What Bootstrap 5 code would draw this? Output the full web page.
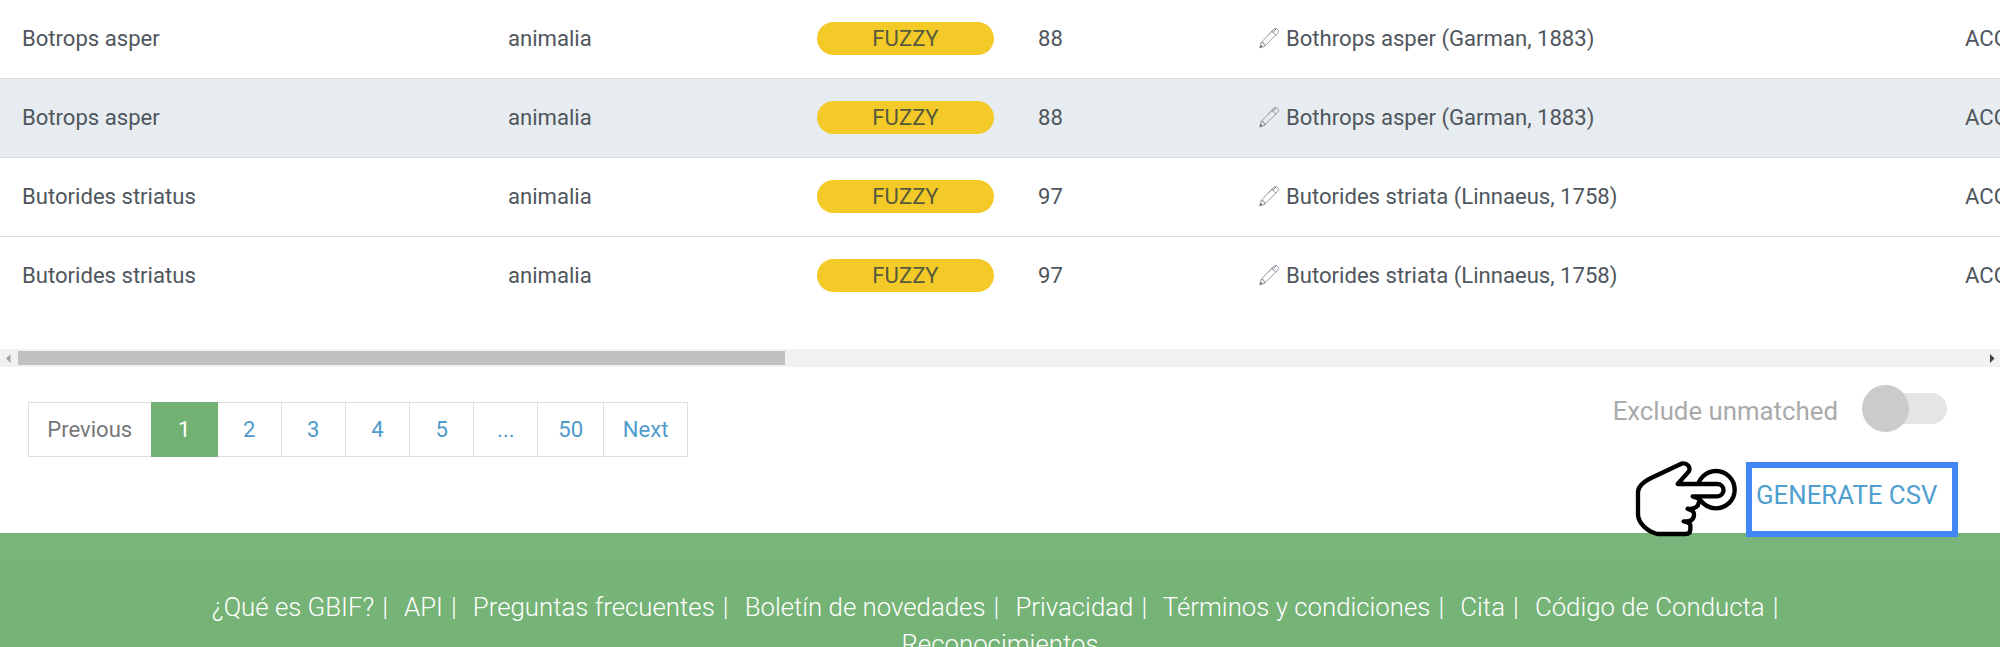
<!DOCTYPE html>
<html lang="es">
<head>
<meta charset="utf-8">
<meta name="viewport" content="width=device-width, initial-scale=1">
<title>GBIF</title>
<link href="https://cdn.jsdelivr.net/npm/bootstrap@5.3.0/dist/css/bootstrap.min.css" rel="stylesheet">
<style>
body{font-family:Roboto,"Liberation Sans",sans-serif;font-size:22.1px;color:#4f565d;height:647px;overflow:hidden;background:#fff}
.results{table-layout:fixed;width:2486px;margin:-1px 0 0}
.results td{height:79px;padding:0 0 0 22px;border-bottom:1px solid #dcdfe1;vertical-align:middle;white-space:nowrap;color:#4f565d;line-height:33px}
.results tr:last-child td{border-bottom:0;padding-bottom:1px}
.results tr.picked td{background:#e7ecf0}
.match{width:177px;height:33px;line-height:33px;background:#f4ca28;color:#575a3b}
.results-wrap{height:349px;overflow:hidden}
.pen{margin:0 6px 0 1px;vertical-align:-3px}
.hbar{height:18px;background:#f1f1f1;padding:0 5px 0 6px}
.hbar .thumb{width:767px;height:14px;background:#c1c1c1;margin-left:7px}
.below{height:166px}
.pages{margin:35px 0 0 27.5px}
.pages .page-link{height:55px;line-height:53px;padding:0;text-align:center;border:1px solid #ddd;border-radius:0!important;color:#509bca;font-size:22.1px}
.pages .disabled .page-link{color:#777;background:#fff}
.pages .active .page-link{background:#71b171;border-color:#71b171;color:#fff}
.w-prev{width:124.5px}.w-one{width:65.500px}.w-num{width:64.2px}.w-fifty{width:65.5px}.w-next{width:84.5px}
.switch-label{font-size:25.8px;line-height:36px;color:#aaa;margin-right:31px}
.switch-row{padding:18px 53px 0 0;height:84px}
.track{width:78px;height:31px;margin-top:8px;border-radius:16px;background:#e5e5e5}
.knob{left:-7px;top:-8px;width:47px;height:47px;background:#cbcbcb}
.csv-row{margin:4px 42px 0 0;height:85px}
.csv{width:212px;height:75px;margin:7px 0 0 1px;border:6px solid #4285f4;color:#509fce;font-size:25.8px;line-height:40px;padding:7px 0 0 4px;white-space:nowrap}
.foot{height:114px;padding-top:56px;background:linear-gradient(#79b57a,#74b275);color:#fff;font-weight:300;font-size:25.8px;line-height:37px}
.foot i{font-style:normal;margin:0 9.8px 0 1.8px}
</style>
</head>
<body>
<svg class="d-none">
<symbol id="pen" viewBox="0 0 22 22">
<g fill="none" stroke="#858a92" stroke-width=".9" stroke-linejoin="round" stroke-linecap="round"><path d="M1 21 2.300 15.800 15.500 1.800Q17 .5 18.300 1.300L20.300 2.900Q21.200 4 20 5.500L6 19.500Z"/><path d="M2.300 15.800 4.500 15.800 5 17.400 6.300 17.700 6 19.500M1 21 3.500 18.500M13.500 4 17.700 8M10 7.500 15.500 2M18 1.200 14.600 5.500"/></g>
<path d="M1 21 1.600 18.500 3.400 20.200Z" fill="#555a60"/>
</symbol>
</svg>
<main class="results-wrap">
<table class="results">
<colgroup><col style="width:486px"><col style="width:309px"><col style="width:221px"><col style="width:220px"><col style="width:707px"><col></colgroup>
<tbody>
<tr><td>Botrops asper</td><td>animalia</td><td><div class="match rounded-pill text-center">FUZZY</div></td><td>88</td><td><svg class="pen" width="21" height="22"><use href="#pen"/></svg>Bothrops asper (Garman, 1883)</td><td>ACCEPTED</td></tr>
<tr class="picked"><td>Botrops asper</td><td>animalia</td><td><div class="match rounded-pill text-center">FUZZY</div></td><td>88</td><td><svg class="pen" width="21" height="22"><use href="#pen"/></svg>Bothrops asper (Garman, 1883)</td><td>ACCEPTED</td></tr>
<tr><td>Butorides striatus</td><td>animalia</td><td><div class="match rounded-pill text-center">FUZZY</div></td><td>97</td><td><svg class="pen" width="21" height="22"><use href="#pen"/></svg>Butorides striata (Linnaeus, 1758)</td><td>ACCEPTED</td></tr>
<tr><td>Butorides striatus</td><td>animalia</td><td><div class="match rounded-pill text-center">FUZZY</div></td><td>97</td><td><svg class="pen" width="21" height="22"><use href="#pen"/></svg>Butorides striata (Linnaeus, 1758)</td><td>ACCEPTED</td></tr>
</tbody>
</table>
</main>
<div class="hbar d-flex align-items-center">
<svg width="5" height="9"><path d="M4.500 0V9L0 4.500Z" fill="#a3a3a3"/></svg>
<div class="thumb"></div>
<svg class="ms-auto" width="5" height="9"><path d="M0 0V9L4.500 4.500Z" fill="#404040"/></svg>
</div>
<div class="below d-flex justify-content-between">
<ul class="pagination pages">
<li class="page-item disabled w-prev"><a class="page-link">Previous</a></li>
<li class="page-item active w-one"><a class="page-link" href="#">1</a></li>
<li class="page-item w-num"><a class="page-link" href="#">2</a></li>
<li class="page-item w-num"><a class="page-link" href="#">3</a></li>
<li class="page-item w-num"><a class="page-link" href="#">4</a></li>
<li class="page-item w-num"><a class="page-link" href="#">5</a></li>
<li class="page-item w-num"><a class="page-link" href="#">...</a></li>
<li class="page-item w-fifty"><a class="page-link" href="#">50</a></li>
<li class="page-item w-next"><a class="page-link" href="#">Next</a></li>
</ul>
<div>
<div class="switch-row d-flex justify-content-end align-items-start">
<span class="switch-label mt-2">Exclude unmatched</span>
<div class="track position-relative"><div class="knob rounded-circle position-absolute"></div></div>
</div>
<div class="csv-row d-flex justify-content-end align-items-start position-relative z-1">
<svg width="115" height="85" viewBox="0 0 345 255" stroke="#000" stroke-width="13" stroke-linejoin="round" stroke-linecap="round">
<circle cx="258" cy="104" r="56" fill="#fff"/>
<path fill="#fff" d="M143 87 176 50C184 36 171 22 154 26L65 68C42 79 24 95 24 112V180C26 205 51 229 82 237H168Q180 237 181 224L181 210Q179 202 161 199Q186 202 191 186Q194 174 188 168L173 161Q190 165 203 152Q210 138 206 130L188 124H262A18.500 18.500 0 0 0 262 87Z"/>
</svg>
<div class="csv">GENERATE CSV</div>
</div>
</div>
</div>
<footer class="foot text-center">¿Qué es GBIF? <i>|</i> API <i>|</i> Preguntas frecuentes <i>|</i> Boletín de novedades <i>|</i> Privacidad <i>|</i> Términos y condiciones <i>|</i> Cita <i>|</i> Código de Conducta <i>|</i><br>Reconocimientos</footer>
<script src="https://cdn.jsdelivr.net/npm/bootstrap@5.3.0/dist/js/bootstrap.bundle.min.js"></script>
</body>
</html>
